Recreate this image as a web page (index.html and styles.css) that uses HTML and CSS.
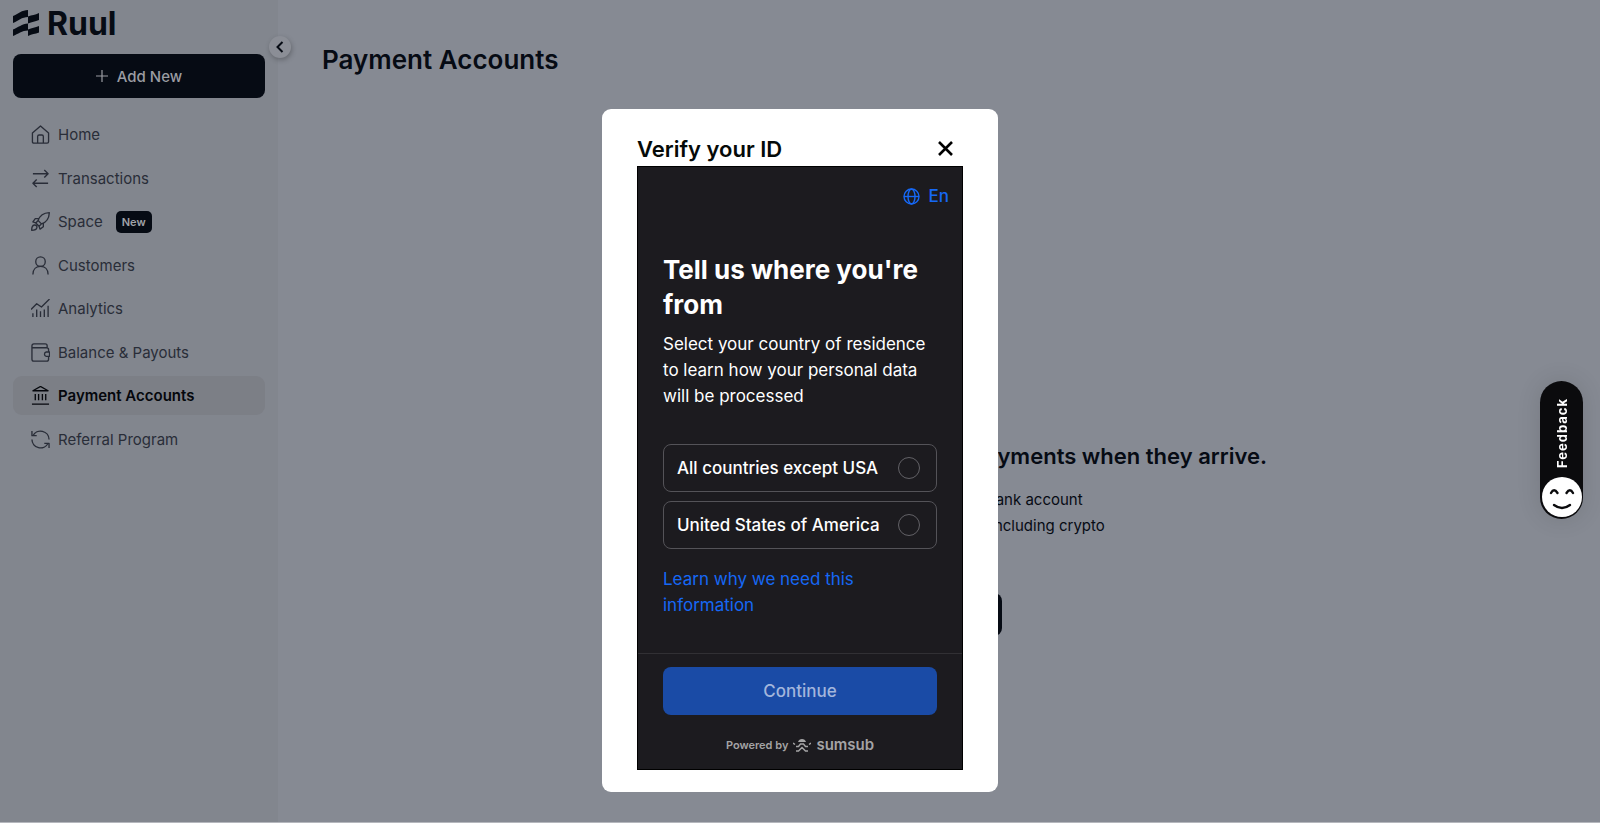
FILE: index.html
```html
<!DOCTYPE html>
<html lang="en">
<head>
    <meta charset="UTF-8">
    <meta name="viewport" content="width=device-width, initial-scale=1.0">
    <title>Payment Accounts - Ruul</title>
    <link rel="stylesheet" href="styles.css">
</head>
<body>
    <div class="app">
        <!-- Sidebar -->
        <aside class="sidebar">
            <a class="logo" href="#">
                <svg width="26" height="27" viewBox="0 0 26 27" fill="currentColor">
                    <path d="M0 6C5 4 9 0 15 0V7C9 7 5 11 0 13Z"/>
                    <path d="M15 6.500C19 5 22 5 26 3V10C22 12 19 11.500 15 13.500Z"/>
                    <path d="M0 19.500C5 17.500 9 14 15 13.500V20.500C9 20.500 5 24 0 26Z"/>
                    <path d="M15 19.500C19 18 22 17.500 26 16V22.500C22 24 19 24 15 26Z"/>
                </svg>
                <span>Ruul</span>
            </a>
            <button class="collapse" type="button" aria-label="Collapse menu">
                <svg width="8" height="12" viewBox="0 0 8 12" fill="none" stroke="currentColor" stroke-width="2"><path d="M6.500 1L1.500 6L6.500 11"/></svg>
            </button>
            <button class="add-new" type="button">
                <svg width="12" height="12" viewBox="0 0 12 12" stroke="currentColor" stroke-width="1.200"><path d="M6 0V12M0 6H12"/></svg>
                Add New
            </button>

            <nav class="menu">
                <a class="menu-item" href="#">
                    <svg class="icon" viewBox="0 0 20 20"><path d="M1.500 8.500L10 1L18.500 8.500V17.500Q18.500 19 17 19H3Q1.500 19 1.500 17.500ZM7 19V12Q7 10.500 8.500 10.500H11.500Q13 10.500 13 12V19"/></svg>
                    Home
                </a>
                <a class="menu-item" href="#">
                    <svg class="icon" viewBox="0 0 20 20"><path d="M2 5H18M14 1L18 5L14 9M18 15H2M6 11L2 15L6 19"/></svg>
                    Transactions
                </a>
                <a class="menu-item" href="#">
                    <svg class="icon" viewBox="0 0 20 20"><path d="M7.500 9C9 4.500 13 1 19.300 0.700C19 7 15.500 11 11 12.500ZM8 7H4.500L2 10.500L5 11.500M13 12V15.500L9.500 18L8.500 15M7.500 9L5 11.500L8.500 15L11 12.500M0.700 19.300C0.700 16 1.500 14 3.500 13.700C5.500 13.500 6.500 15 6.200 16.500C5.800 18.500 4 19.300 0.700 19.300Z"/></svg>
                    Space
                    <span class="tag">New</span>
                </a>
                <a class="menu-item" href="#">
                    <svg class="icon" viewBox="0 0 20 20"><circle cx="10" cy="6" r="5"/><path d="M2 19.500C2 14 5.500 11 10 11S18 14 18 19.500"/></svg>
                    Customers
                </a>
                <a class="menu-item" href="#">
                    <svg class="icon" viewBox="0 0 20 20"><path d="M0 11L6 5L11 8.500L19.500 0M2 19V15M6 19V11M10 19V13M14 19V11M18 19V7"/></svg>
                    Analytics
                </a>
                <a class="menu-item" href="#">
                    <svg class="icon" viewBox="0 0 20 20"><path d="M18.500 9V7Q18.500 5 16.500 5H1V17Q1 19 3 19H16.500Q18.500 19 18.500 17V14M1 5V3Q1 1 3 1H15Q17 1 17 3V5M19.500 9.500H16A2.300 2.300 0 0 0 16 14H19.500Z"/></svg>
                    Balance &amp; Payouts
                </a>
                <a class="menu-item active" href="#">
                    <svg class="icon" viewBox="0 0 20 20"><path d="M2 5L10 0.500L18 5ZM4.500 8.500V15M8 8.500V15M12 8.500V15M15.500 8.500V15M1 19H19"/></svg>
                    Payment Accounts
                </a>
                <a class="menu-item" href="#">
                    <svg class="icon" viewBox="0 0 20 20"><path d="M1 1V6H6M2 6A9 9 0 0 1 19 10M1 10A9 9 0 0 0 18 14M14 14H19V19"/></svg>
                    Referral Program
                </a>
            </nav>
        </aside>

        <!-- Page content -->
        <main class="content">
            <h1>Payment Accounts</h1>
            <section class="empty">
                <h2>payments when they arrive.</h2>
                <ul>
                    <li>into your bank account</li>
                    <li>methods, including crypto</li>
                </ul>
                <button class="empty-button" type="button" aria-label="Add account"></button>
            </section>
        </main>
    </div>

    <button class="feedback" type="button">
        <span>Feedback</span>
        <svg width="40" height="40" viewBox="0 0 40 40" fill="none" stroke="#0b0b0d" stroke-width="2.400" stroke-linecap="round">
            <circle cx="20" cy="20" r="20" fill="#fff" stroke="none"/>
            <path d="M9 16Q12 10.500 15.500 16M24.500 16Q28 10.500 31 16M12 28Q20 34 28 28"/>
        </svg>
    </button>

    <!-- Verification modal -->
    <div class="overlay">
        <div class="modal" role="dialog" aria-labelledby="modalTitle">
            <header class="modal-header">
                <h2 id="modalTitle">Verify your ID</h2>
                <button class="close" type="button" aria-label="Close">
                    <svg width="15" height="15" viewBox="0 0 15 15" stroke="currentColor" stroke-width="2.600"><path d="M1 1L14 14M14 1L1 14"/></svg>
                </button>
            </header>

            <form class="verify">
                <div class="verify-body">
                    <button class="language" type="button">
                        <svg width="17" height="17" viewBox="0 0 17 17" fill="none" stroke="currentColor" stroke-width="1.400"><circle cx="8.500" cy="8.500" r="7.500"/><ellipse cx="8.500" cy="8.500" rx="3.500" ry="7.500"/><path d="M1 8.500H16"/></svg>
                        En
                    </button>
                    <h3>Tell us where you're from</h3>
                    <p>Select your country of residence to learn how your personal data will be processed</p>
                    <div class="options">
                        <label class="option">All countries except USA <input type="radio" name="country" value="other"></label>
                        <label class="option">United States of America <input type="radio" name="country" value="usa"></label>
                    </div>
                    <a class="learn" href="#">Learn why we need this information</a>
                </div>
                <footer class="verify-footer">
                    <button class="continue" type="submit" disabled>Continue</button>
                    <div class="powered">
                        Powered by
                        <svg width="18" height="13" viewBox="0 0 18 13" fill="none" stroke="currentColor" stroke-width="1.500">
                            <path d="M5 3Q6 0 9 0T13 3Z" fill="currentColor" stroke="none"/>
                            <path d="M0 4L2 5.500M18 4L16 5.500M3 7.500H5.500L7.500 5H10.500L12.500 7.500H15M3 12H5.500L9 8.500L12.500 12H15"/>
                        </svg>
                        <span class="sumsub">sumsub</span>
                    </div>
                </footer>
            </form>
        </div>
    </div>
</body>
</html>
```

FILE: styles.css
```css
/* Theme Colors */
:root {
    --page: #868a93;
    --sidebar: #82868e;
    --ink: #060b14;
    --muted: #292d38;
    --panel: #1c1b1f;
    --blue: #1668f5;
}

* {
    box-sizing: border-box;
}

body {
    margin: 0;
    font-family: Inter, sans-serif;
    background-color: var(--page);
    color: var(--ink);
}

h1, h2, h3, p, ul {
    margin: 0;
    padding: 0;
}

button {
    font-family: inherit;
    border: none;
    padding: 0;
    cursor: pointer;
}

a {
    text-decoration: none;
}

.app {
    display: flex;
    min-height: 100vh;
    border-bottom: 1px solid #b5b7bd;
}

/* Sidebar */
.sidebar {
    position: relative;
    width: 278px;
    flex-shrink: 0;
    padding: 10px 13px;
    background-color: var(--sidebar);
}

.logo {
    display: flex;
    align-items: center;
    gap: 8px;
    height: 27px;
    color: var(--ink);
    font-size: 32px;
    font-weight: 700;
}

.collapse {
    position: absolute;
    top: 36px;
    right: -13px;
    width: 22px;
    height: 22px;
    display: flex;
    align-items: center;
    justify-content: center;
    border-radius: 50%;
    background-color: #8b8e96;
    color: var(--ink);
    box-shadow: 1px 2px 5px rgba(0, 0, 0, 0.25);
}

.add-new {
    display: flex;
    align-items: center;
    justify-content: center;
    gap: 9px;
    width: 100%;
    height: 44px;
    margin-top: 17px;
    border-radius: 8px;
    background-color: var(--ink);
    color: #9a9ca2;
    font-size: 15px;
    font-weight: 500;
}

.menu {
    display: flex;
    flex-direction: column;
    justify-content: space-between;
    height: 344px;
    margin-top: 17px;
}

.menu-item {
    display: flex;
    align-items: center;
    gap: 8px;
    height: 39px;
    padding: 0 18px;
    border-radius: 9px;
    color: var(--muted);
    font-size: 15px;
}

.menu-item.active {
    background-color: #7c7f86;
    color: #05070c;
    font-weight: 600;
}

.icon {
    width: 19px;
    height: 19px;
    fill: none;
    stroke: currentColor;
    stroke-width: 1.4;
    stroke-linejoin: round;
}

.tag {
    margin-left: 5px;
    padding: 0 6px;
    border-radius: 5px;
    background-color: var(--ink);
    color: #a0a2a8;
    font-size: 11px;
    font-weight: 600;
    line-height: 22px;
}

/* Page content */
.content {
    flex: 1;
    padding: 42px 44px;
}

.content h1 {
    font-size: 26px;
    font-weight: 600;
    line-height: 36px;
}

.empty {
    display: flex;
    flex-direction: column;
    align-items: center;
    max-width: 656px;
    margin: 362px auto 0;
}

.empty h2 {
    align-self: flex-end;
    font-size: 22px;
    font-weight: 600;
    line-height: 32px;
}

.empty ul {
    align-self: flex-end;
    width: 347px;
    margin-top: 15px;
    list-style: none;
    font-size: 15px;
    line-height: 26px;
}

.empty-button {
    width: 126px;
    height: 43px;
    margin-top: 54px;
    border-radius: 8px;
    background-color: var(--ink);
}

/* Feedback tab */
.feedback {
    position: fixed;
    top: 381px;
    right: 17px;
    display: flex;
    flex-direction: column;
    align-items: center;
    justify-content: space-between;
    width: 43px;
    height: 138px;
    padding: 17px 0 2px;
    border-radius: 22px;
    background-color: #0b0b0d;
    color: #fff;
    font-size: 13px;
    font-weight: 700;
    box-shadow: 0 0 24px rgba(0, 0, 0, 0.12);
}

.feedback span {
    writing-mode: vertical-rl;
    transform: rotate(180deg);
    letter-spacing: 1px;
}

/* Modal */
.overlay {
    position: fixed;
    inset: 0;
    display: flex;
    align-items: flex-start;
    justify-content: center;
    padding-top: 109px;
    pointer-events: none;
}

.modal {
    width: 396px;
    padding: 22px 35px;
    border-radius: 9px;
    background-color: #fff;
    pointer-events: auto;
}

.modal-header {
    display: flex;
    align-items: center;
    justify-content: space-between;
    height: 35px;
    color: #050a08;
}

.modal-header h2 {
    font-size: 22px;
    font-weight: 600;
}

.close {
    display: flex;
    margin-right: 10px;
    background: none;
    color: #000;
}

.verify {
    border: 1px solid #000;
    background-color: var(--panel);
    color: #fff;
}

.verify-body {
    display: flex;
    flex-direction: column;
    padding: 16px 25px 35px;
}

.language {
    display: flex;
    align-items: center;
    align-self: flex-end;
    gap: 9px;
    margin-right: -12px;
    background: none;
    color: var(--blue);
    font-size: 17px;
    font-weight: 500;
    line-height: 26px;
}

.verify-body h3 {
    margin-top: 43px;
    font-size: 26px;
    font-weight: 700;
    line-height: 35px;
}

.verify-body p {
    margin-top: 9px;
    font-size: 17px;
    line-height: 26px;
}

.options {
    display: flex;
    flex-direction: column;
    gap: 9px;
    margin-top: 35px;
}

.option {
    display: flex;
    align-items: center;
    justify-content: space-between;
    height: 48px;
    padding: 0 16px 0 13px;
    border: 1px solid #545358;
    border-radius: 8px;
    font-size: 17px;
    font-weight: 500;
    white-space: nowrap;
}

.option input {
    appearance: none;
    width: 22px;
    height: 22px;
    margin: 0;
    flex-shrink: 0;
    border: 1px solid #626166;
    border-radius: 50%;
}

.option input:checked {
    border: 6px solid var(--blue);
}

.learn {
    margin-top: 17px;
    color: var(--blue);
    font-size: 17px;
    line-height: 26px;
}

.verify-footer {
    padding: 13px 25px 11px;
    border-top: 1px solid #313034;
}

.continue {
    width: 100%;
    height: 48px;
    border-radius: 8px;
    background-color: #1a4ba6;
    color: #a3b6dc;
    font-size: 17px;
    font-weight: 500;
}

.powered {
    display: flex;
    align-items: center;
    justify-content: center;
    gap: 5px;
    height: 26px;
    margin-top: 17px;
    color: #a4a4a5;
    font-size: 11px;
    font-weight: 600;
}

.sumsub {
    font-size: 15px;
    line-height: 16px;
}
```
